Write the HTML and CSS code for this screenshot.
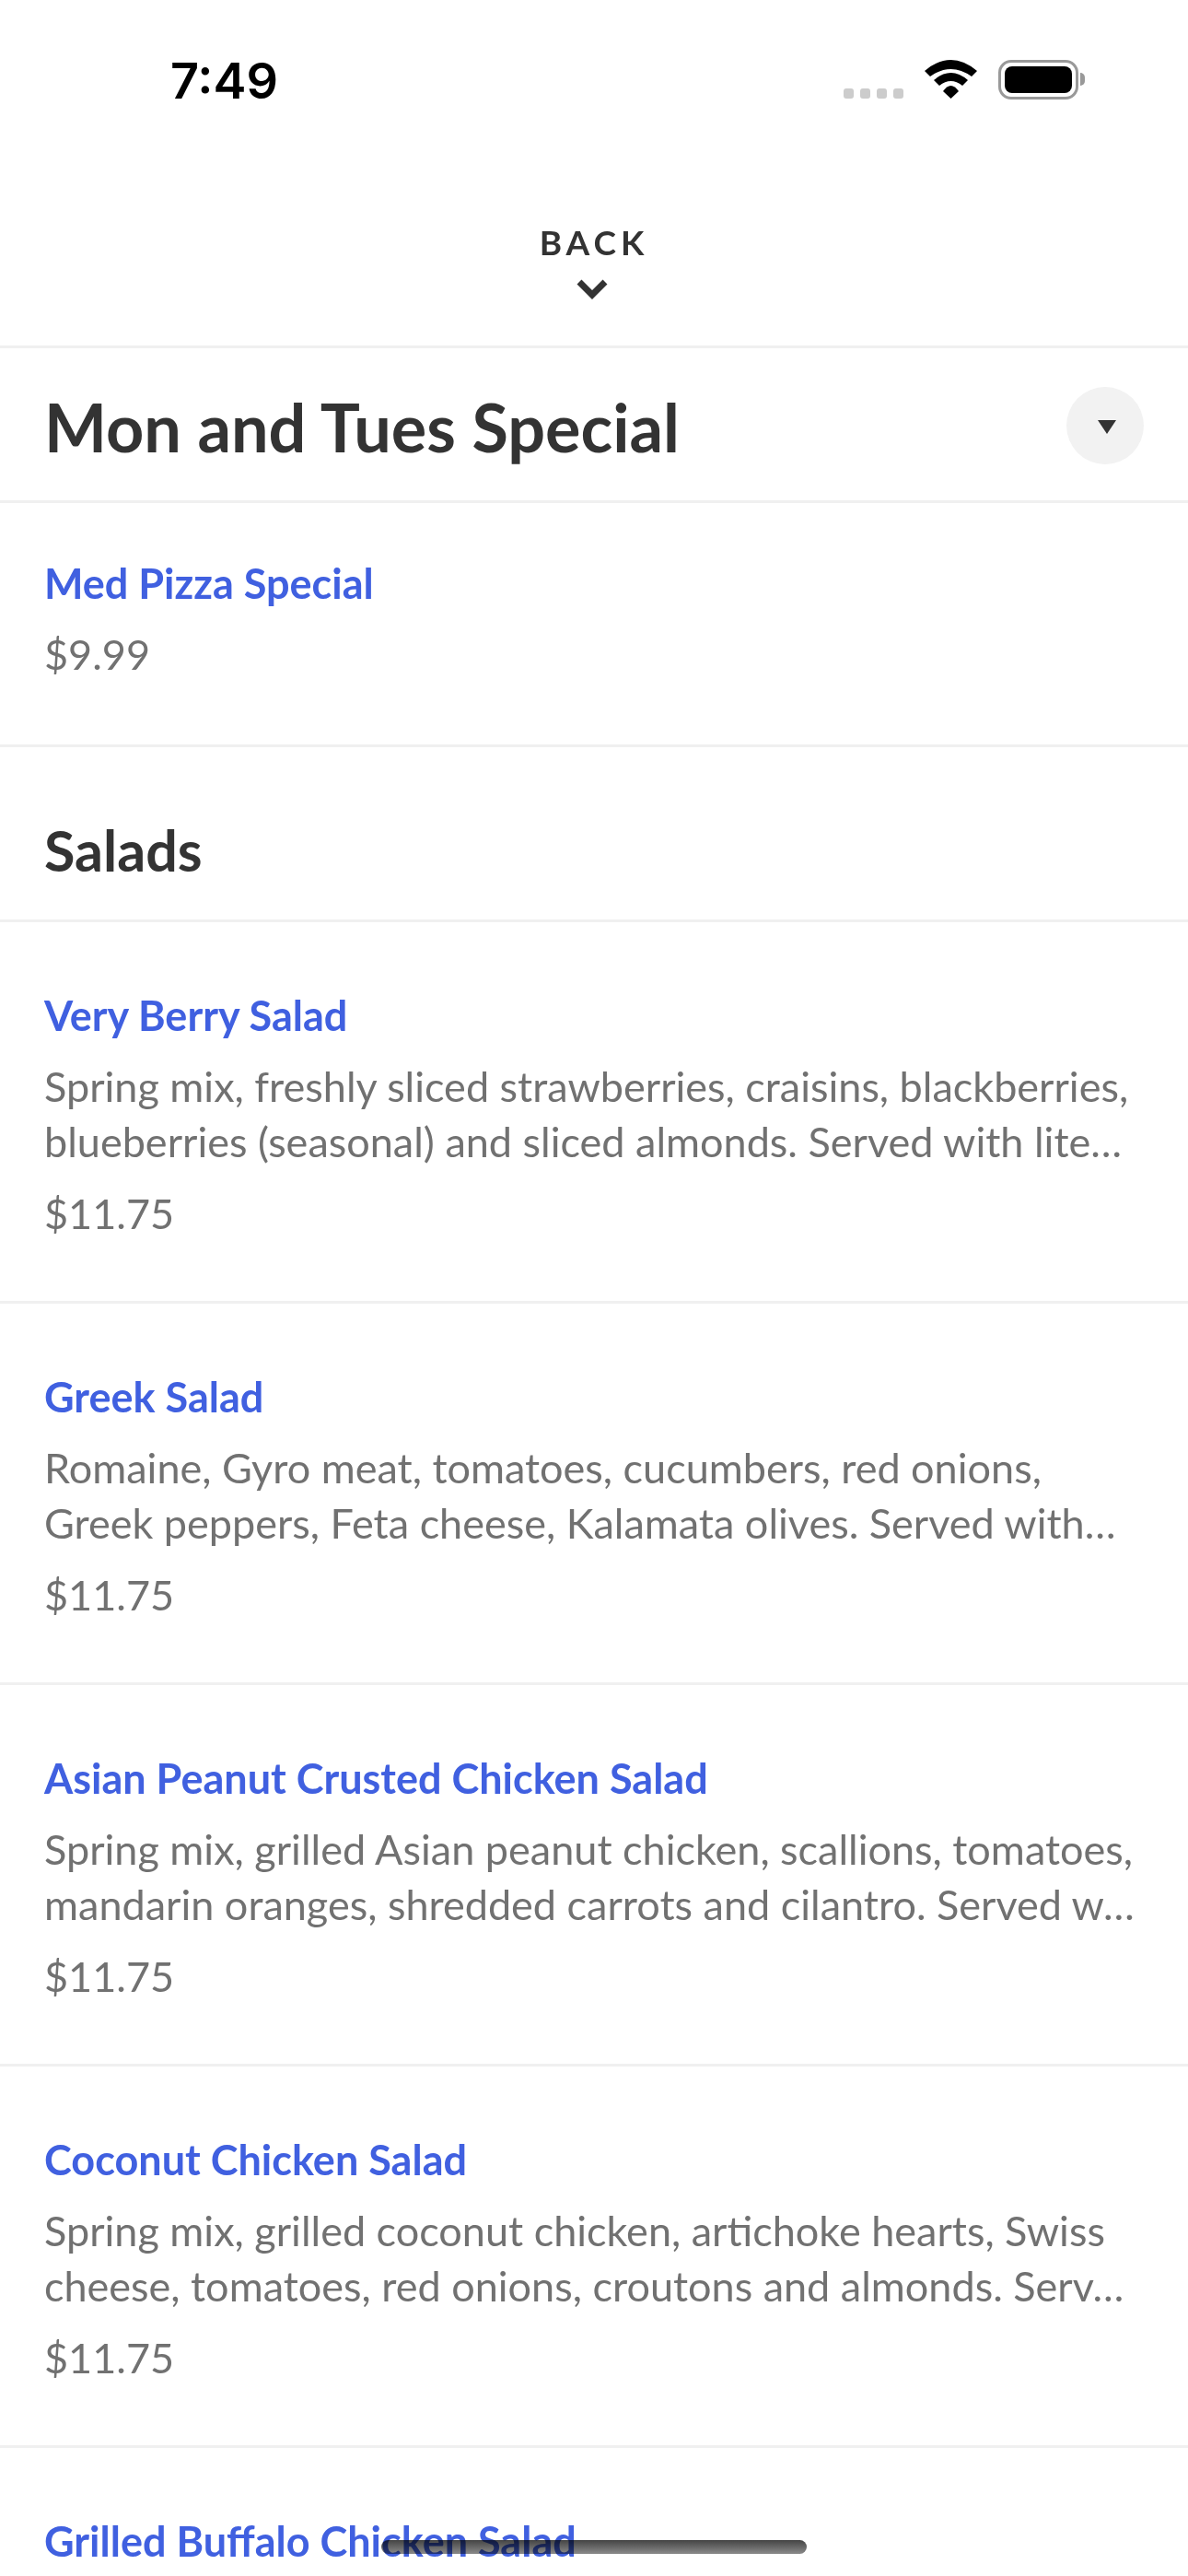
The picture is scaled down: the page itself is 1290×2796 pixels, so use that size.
FILE: index.html
```html
<!DOCTYPE html>
<html lang="en">
<head>
  <meta charset="UTF-8" />
  <meta name="viewport" content="width=device-width, initial-scale=1.0"/>
  <title>Menu</title>
  <link rel="stylesheet" href="styles.css">
</head>
<body>

  <div class="status-bar">
    <span class="status-time">7:49</span>
    <div class="status-icons">
      <div class="signal-dots"><i></i><i></i><i></i><i></i></div>
      <svg class="wifi" width="57" height="42" viewBox="0 0 57 42">
        <path d="M0 12 Q28.500 -12 57 12 L51 18 Q28.500 2 6 18 Z" fill="#000"/>
        <path d="M10 22 Q28.500 6 47 22 L41 28 Q28.500 18 16 28 Z" fill="#000"/>
        <path d="M20 34 Q28.500 22 37 34 L28.500 42 Z" fill="#000"/>
      </svg>
      <div class="battery"><div class="battery-fill"></div></div>
      <div class="battery-cap"></div>
    </div>
  </div>

  <a class="back-link">
    <span>BACK</span>
    <svg class="back-chevron" width="36" height="24" viewBox="0 0 36 24">
      <path d="M4 3 L18 17 L32 3" fill="none" stroke="#333" stroke-width="7"/>
    </svg>
  </a>

  <div class="category-header">
    <h1>Mon and Tues Special</h1>
    <button class="toggle"><span class="toggle-arrow"></span></button>
  </div>

  <div class="menu-item single">
    <h3>Med Pizza Special</h3>
    <div class="price">$9.99</div>
  </div>

  <h2 class="section-title">Salads</h2>

  <div class="menu-item">
    <h3>Very Berry Salad</h3>
    <p>Spring mix, freshly sliced strawberries, craisins, blackberries, blueberries (seasonal) and sliced almonds. Served with lite…</p>
    <div class="price">$11.75</div>
  </div>

  <div class="menu-item">
    <h3>Greek Salad</h3>
    <p>Romaine, Gyro meat, tomatoes, cucumbers, red onions, Greek peppers, Feta cheese, Kalamata olives. Served with…</p>
    <div class="price">$11.75</div>
  </div>

  <div class="menu-item">
    <h3>Asian Peanut Crusted Chicken Salad</h3>
    <p>Spring mix, grilled Asian peanut chicken, scallions, tomatoes, mandarin oranges, shredded carrots and cilantro. Served w…</p>
    <div class="price">$11.75</div>
  </div>

  <div class="menu-item">
    <h3>Coconut Chicken Salad</h3>
    <p>Spring mix, grilled coconut chicken, artichoke hearts, Swiss cheese, tomatoes, red onions, croutons and almonds. Serv…</p>
    <div class="price">$11.75</div>
  </div>

  <div class="menu-item last">
    <h3>Grilled Buffalo Chicken Salad</h3>
  </div>

  <div class="home-indicator"></div>

</body>
</html>
```

FILE: styles.css
```css
html, body {
  height: 2796px;
  overflow: hidden;
}
body {
  font-family: 'Lato', sans-serif;
  background-color: #fff;
  color: #333;
  margin: 0;
  padding: 0;
  position: relative;
}

/* top bar */
.status-bar {
  height: 118px;
  display: flex;
  justify-content: space-between;
  padding: 0 112px 0 185px;
  box-sizing: border-box;
}
.status-time {
  font-family: 'Inter', sans-serif;
  font-weight: 600;
  font-size: 54px;
  color: #000;
  line-height: 88px;
  padding-top: 44px;
}
.status-icons {
  display: flex;
  align-items: flex-start;
  padding-top: 65px;
}
.signal-dots {
  display: flex;
  gap: 7px;
  margin: 31px 23px 0 0;
}
.signal-dots i {
  width: 11px;
  height: 11px;
  border-radius: 3px;
  background-color: #ccc;
}
.wifi {
  margin-right: 23px;
}
.battery {
  width: 87px;
  height: 43px;
  border: 3px solid #999;
  border-radius: 14px;
  padding: 4px;
  box-sizing: border-box;
}
.battery-fill {
  height: 100%;
  background-color: #000;
  border-radius: 8px;
}
.battery-cap {
  width: 5px;
  height: 14px;
  margin: 14px 0 0 2px;
  background-color: #999;
  border-radius: 0 7px 7px 0;
}

/* back button */
.back-link {
  height: 260px;
  display: flex;
  flex-direction: column;
  align-items: center;
  padding-top: 123px;
  border-bottom: 3px solid #f0f0f0;
  box-sizing: border-box;
}
.back-link span {
  font-size: 37px;
  font-weight: 700;
  letter-spacing: 5px;
  line-height: 44px;
  margin-bottom: 18px;
}
.back-chevron {
  margin-right: 4px;
}

/* list */
.category-header {
  height: 168px;
  display: flex;
  align-items: center;
  justify-content: space-between;
  padding: 0 48px;
  border-bottom: 3px solid #f0f0f0;
  box-sizing: border-box;
}
h1 {
  font-size: 72px;
  font-weight: 700;
  margin: 4px 0 0;
}
.toggle {
  width: 84px;
  height: 84px;
  border: none;
  border-radius: 50%;
  background-color: #f2f2f2;
  margin-top: 3px;
  padding: 0;
  display: flex;
  align-items: center;
  justify-content: center;
}
.toggle-arrow {
  width: 0;
  height: 0;
  margin: 2px 0 0 3px;
  border-left: 10.500px solid transparent;
  border-right: 10.500px solid transparent;
  border-top: 15px solid #333;
}
.section-title {
  font-size: 61px;
  font-weight: 700;
  margin: 0;
  height: 190px;
  line-height: 224px;
  padding: 0 48px;
  border-bottom: 3px solid #f0f0f0;
  box-sizing: border-box;
}
.menu-item {
  height: 414px;
  padding: 69px 48px 0;
  border-bottom: 3px solid #f0f0f0;
  box-sizing: border-box;
}
.menu-item.single {
  height: 265px;
  padding-top: 55px;
}
.menu-item.last {
  height: auto;
  border-bottom: none;
}
.menu-item h3 {
  font-size: 45px;
  font-weight: 700;
  line-height: 64px;
  color: #4060e0;
  margin: 0 0 15px;
}
.menu-item p {
  font-size: 45px;
  line-height: 60px;
  color: #717171;
  margin: 0 0 18px;
}
.price {
  font-size: 45px;
  line-height: 60px;
  color: #717171;
}

.home-indicator {
  position: absolute;
  left: 414px;
  top: 2757px;
  width: 462px;
  height: 15px;
  border-radius: 8px;
  background: linear-gradient(to bottom, #444, #8a8a8a);
  mix-blend-mode: multiply;
}
```
